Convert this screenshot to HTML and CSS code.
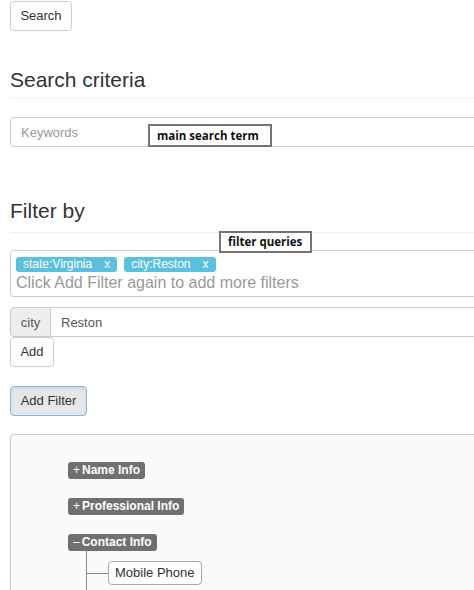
FILE: index.html
```html
<!DOCTYPE html>
<html>
<head>
<meta charset="utf-8">
<link rel="stylesheet" href="styles.css">
</head>
<body>
<div class="page">
  <button class="btn btn-search">Search</button>

  <h3 class="heading heading-first">Search criteria</h3>
  <hr class="rule rule-first">
  <div class="field-wrap">
    <div class="text-input"><span class="placeholder">Keywords</span></div>
    <div class="note note-main">main search term</div>
  </div>

  <h3 class="heading heading-second">Filter by</h3>
  <hr class="rule rule-second">
  <div class="field-wrap">
    <div class="note note-filter">filter queries</div>
    <div class="tag-box">
      <div class="tags">
        <span class="tag">state:Virginia<span class="tag-x">x</span></span>
        <span class="tag">city:Reston<span class="tag-x">x</span></span>
      </div>
      <div class="tag-hint">Click Add Filter again to add more filters</div>
    </div>
  </div>

  <div class="input-group">
    <span class="addon">city</span>
    <span class="group-value">Reston</span>
  </div>
  <button class="btn btn-add">Add</button>
  <button class="btn btn-addfilter">Add Filter</button>

  <div class="tree-panel">
    <div class="node"><span class="sign">+</span>Name Info</div>
    <div class="node"><span class="sign">+</span>Professional Info</div>
    <div class="node"><span class="sign">–</span>Contact Info</div>
    <div class="children">
      <div class="leaf">Mobile Phone</div>
    </div>
  </div>
</div>
</body>
</html>
```

FILE: styles.css
```css
html, body {
  margin: 0;
  padding: 0;
  overflow: hidden;
  background: #fff;
}
body {
  width: 474px;
  height: 590px;
  font-family: "Liberation Sans", Arial, sans-serif;
  color: #333;
}
.page {
  width: 640px;
  padding-left: 10px;
  display: flex;
  flex-direction: column;
  align-items: flex-start;
}
.btn {
  font-family: "Liberation Sans", Arial, sans-serif;
  font-size: 13px;
  color: #333;
  background: #fff;
  border: 1px solid #ccc;
  border-radius: 4px;
  height: 30px;
  padding: 0 8px;
  line-height: 28px;
  margin: 0;
}
.btn-search {
  margin-top: 1px;
  width: 62px;
}
.heading {
  font-size: 21px;
  font-weight: 400;
  line-height: 22px;
  margin: 0;
  color: #333;
}
.heading-first { margin-top: 38px; }
.heading-second { margin-top: 53px; }
.rule {
  align-self: stretch;
  border: 0;
  border-top: 1px solid #eee;
  height: 0;
  margin: 0;
}
.rule-first { margin-top: 7px; }
.rule-second { margin-top: 10px; }
.field-wrap {
  position: relative;
  align-self: stretch;
}
.text-input {
  margin-top: 18px;
  height: 30px;
  border: 1px solid #ccc;
  border-radius: 4px;
  box-sizing: border-box;
  padding-left: 10px;
  display: flex;
  align-items: center;
  font-size: 13px;
}
.placeholder { color: #999; }
.note {
  position: absolute;
  background: #fff;
  border: 2px solid #757575;
  font-family: "Open Sans", sans-serif;
  font-weight: 700;
  font-size: 11.5px;
  color: #111;
  box-sizing: border-box;
  height: 23px;
  line-height: 19px;
  padding: 0 7px;
  white-space: nowrap;
  z-index: 2;
}
.note-main {
  left: 138px;
  top: 25px;
  width: 124px;
}
.note-filter {
  left: 209px;
  top: -2px;
  width: 93px;
  height: 22px;
  line-height: 18px;
}
.tag-box {
  margin-top: 17px;
  height: 47px;
  border: 1px solid #ccc;
  border-radius: 4px;
  box-sizing: border-box;
  padding: 6px 5px 0;
}
.tags {
  display: flex;
  gap: 7px;
}
.tag {
  background: #5bc0de;
  color: #fff;
  font-size: 12px;
  height: 15px;
  line-height: 15px;
  padding: 0 7px;
  border-radius: 3px;
  white-space: nowrap;
}
.tag-x { margin-left: 12px; }
.tag-hint {
  color: #999;
  font-size: 16px;
  line-height: 20px;
  margin-top: 1px;
  white-space: nowrap;
}
.input-group {
  margin-top: 10px;
  align-self: stretch;
  display: flex;
  height: 30px;
  box-sizing: border-box;
  font-size: 13px;
  color: #555;
}
.addon {
  width: 41px;
  box-sizing: border-box;
  background: #eee;
  border: 1px solid #ccc;
  border-radius: 4px 0 0 4px;
  display: flex;
  align-items: center;
  justify-content: center;
}
.group-value {
  flex: 1;
  border: 1px solid #ccc;
  border-left: 0;
  border-radius: 0 4px 4px 0;
  padding-left: 10px;
  display: flex;
  align-items: center;
}
.btn-add {
  width: 44px;
  padding: 0;
}
.btn-addfilter {
  margin-top: 19px;
  width: 77px;
  padding: 0;
  background: #e6e6e6;
  border-color: #8eb3e6;
  box-shadow: inset 0 2px 3px rgba(0,0,0,0.08);
}
.tree-panel {
  margin-top: 18px;
  align-self: stretch;
  height: 220px;
  background: #fafafa;
  border: 1px solid #c8c8c8;
  border-radius: 4px;
  padding: 27px 0 0 57px;
  display: flex;
  flex-direction: column;
  align-items: flex-start;
  gap: 19px;
}
.node {
  background: #707070;
  color: #fff;
  font-weight: 700;
  font-size: 12px;
  height: 17px;
  line-height: 17px;
  padding: 0 5px;
  border-radius: 3px;
  white-space: nowrap;
}
.sign {
  margin-right: 2px;
  font-weight: 400;
}
.children {
  margin-top: -19px;
  margin-left: 18px;
  border-left: 1px solid #8a8a8a;
  padding: 10px 0 0 21px;
  height: 60px;
}
.leaf {
  position: relative;
  background: #fff;
  border: 1px solid #a8a8a8;
  border-radius: 4px;
  height: 24px;
  box-sizing: border-box;
  padding: 0 6px;
  line-height: 22px;
  font-size: 13px;
  color: #333;
  display: inline-block;
}
.leaf::before {
  content: "";
  position: absolute;
  left: -22px;
  top: 11px;
  width: 21px;
  border-top: 1px solid #8a8a8a;
}
```
